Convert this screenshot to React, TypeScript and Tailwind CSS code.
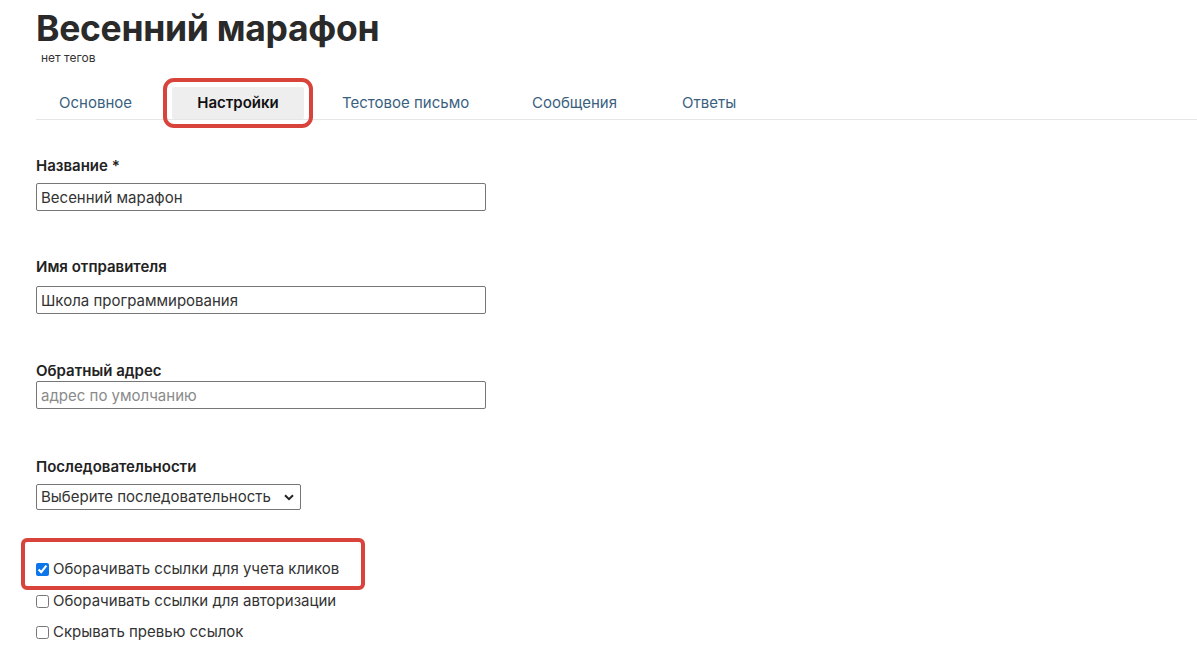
import { useState } from "react";

const tabs = [
  { name: "Основное", cls: "w-[136px] pl-[23px]" },
  { name: "Настройки", cls: "" },
  { name: "Тестовое письмо", cls: "w-[190px] pl-[38px]" },
  { name: "Сообщения", cls: "w-[150px] pl-[38px]" },
  { name: "Ответы", cls: "pl-[38px]" },
];

function Field({ label, value, placeholder, className, gap }: { label: string; value?: string; placeholder?: string; className?: string; gap: string }) {
  return (
    <div className={className}>
      <label className="block text-[15px] font-semibold leading-[20px] text-[#222]">{label}</label>
      <input
        defaultValue={value}
        placeholder={placeholder}
        className={`${gap} block h-[28px] w-[450px] rounded-[2px] border border-[#767676] px-[4px] text-[15px] text-[#333] placeholder:text-[#8a8a8a] outline-none`}
      />
    </div>
  );
}

export default function App() {
  const [checks, setChecks] = useState([true, false, false]);
  const labels = [
    "Оборачивать ссылки для учета кликов",
    "Оборачивать ссылки для авторизации",
    "Скрывать превью ссылок",
  ];

  return (
    <div className="min-h-[660px] bg-white pl-[36px] font-['Inter','Noto_Sans',sans-serif] text-[#222]">
      {/* Header */}
      <h1 className="pt-[7px] text-[35.5px] font-bold leading-[43px] tracking-[-0.3px] text-[#2a2a2a]">Весенний марафон</h1>
      <div className="ml-[5px] text-[12px] leading-[16px] text-[#333]">нет тегов</div>

      {/* Tabs */}
      <div className="mt-[21px] flex h-[33px] items-stretch border-b border-[#e6e6e6]">
        {tabs.map((t, i) =>
          i === 1 ? (
            <div
              key={t.name}
              className="flex w-[132px] items-center justify-center rounded-[2px] bg-[#eeeeee] text-[15px] font-semibold text-[#111] outline-4 outline-[#d8433b] outline-offset-[5px]"
            >
              {t.name}
            </div>
          ) : (
            <div key={t.name} className={`flex items-center text-[15px] text-[#3b5f7f] ${t.cls}`}>
              {t.name}
            </div>
          )
        )}
      </div>

      {/* Form */}
      <Field className="mt-[36px]" gap="mt-[7px]" label="Название *" value="Весенний марафон" />
      <Field className="mt-[46px]" gap="mt-[9px]" label="Имя отправителя" value="Школа программирования" />
      <Field className="mt-[47px]" gap="mt-[0px]" label="Обратный адрес" placeholder="адрес по умолчанию" />

      <div className="mt-[48px]">
        <label className="block text-[15px] font-semibold leading-[20px] text-[#222]">Последовательности</label>
        <div className="relative mt-[7px] inline-block">
          <select className="block h-[26px] w-[265px] appearance-none rounded-[2px] border border-[#767676] pl-[4px] pr-[20px] text-[15px] text-[#333] outline-none">
            <option>Выберите последовательность</option>
          </select>
          <svg className="pointer-events-none absolute right-[7px] top-[10px]" width="10" height="7" viewBox="0 0 10 7">
            <path d="M1 1.2 L5 5.2 L9 1.2" fill="none" stroke="#222" strokeWidth="2" />
          </svg>
        </div>
      </div>

      {/* Checkboxes */}
      <div className="mt-[42px] flex flex-col">
        {labels.map((l, i) => (
          <label
            key={l}
            className={`relative flex items-center gap-[4px] text-[15px] text-[#333] ${i === 0 ? "h-[34px]" : "h-[31px]"}`}
          >
            <input
              type="checkbox"
              checked={checks[i]}
              onChange={() => setChecks(checks.map((c, j) => (j === i ? !c : c)))}
              className="m-0 h-[13px] w-[13px] accent-[#0b75e9]"
            />
            <span>{l}</span>
            {i === 0 && (
              <span className="pointer-events-none absolute left-[-15px] top-[-14px] h-[52px] w-[344px] rounded-[6px] border-4 border-[#d8433b]" />
            )}
          </label>
        ))}
      </div>
    </div>
  );
}
